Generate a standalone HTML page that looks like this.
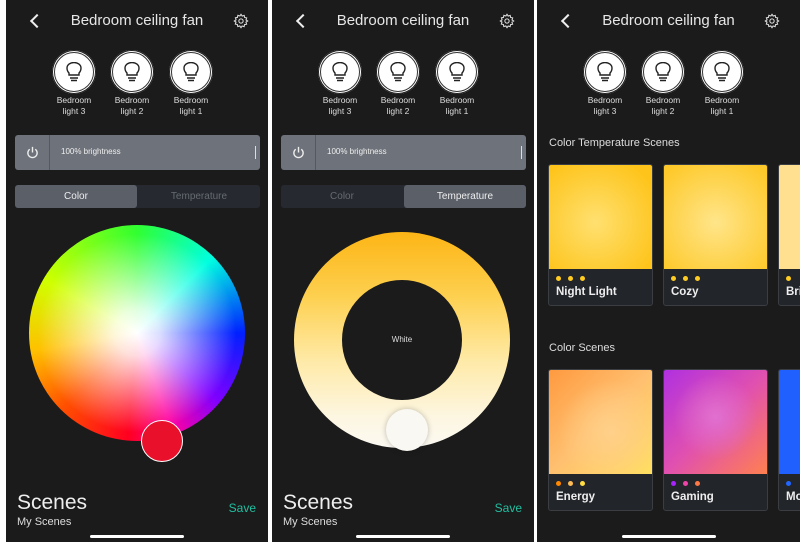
<!DOCTYPE html>
<html><head><meta charset="utf-8"><style>
*{margin:0;padding:0;box-sizing:border-box}
body{width:800px;height:542px;background:#fff;position:relative;overflow:hidden;font-family:"Liberation Sans",sans-serif;color:#fff}
.p{position:absolute;top:0;height:542px;background:#1b1b1b;overflow:hidden}
.t{position:absolute;top:12px;width:100%;text-align:center;font-size:15px;color:#e6e6e6}
.back{position:absolute;width:10px;height:10px;border-left:2px solid #eee;border-bottom:2px solid #eee;transform:rotate(45deg);left:26px;top:16px}
.gear{position:absolute;top:13px;right:19px}
.b{position:absolute;top:50px;width:44px;height:44px;border-radius:50%;background:#fff;box-shadow:0 0 0 1px #1b1b1b inset}
.b::after{content:"";position:absolute;inset:2px;border-radius:50%;border:1px solid #333}
.b svg{position:absolute;left:14px;top:12px}
.bl{position:absolute;top:95px;width:60px;text-align:center;font-size:8.5px;line-height:11px;color:#ddd}
.bar{position:absolute;left:9px;top:135px;width:245px;height:35px;background:#6e727a;border-radius:3px}
.bar .pw{position:absolute;left:0;top:0;width:35px;height:35px;border-right:1px solid #555a60}
.bar span{position:absolute;left:46px;top:12px;font-size:8px;color:#eee}
.bar i{position:absolute;right:4px;top:11px;width:1px;height:13px;background:#ddd}
.tabs{position:absolute;left:9px;top:185px;width:245px;height:23px;background:#262a30;border-radius:3px;font-size:10px}
.tabs div{position:absolute;top:0;width:122px;height:23px;text-align:center;line-height:23px;color:#666b72}
.tabs .on{background:#5a5f68;color:#eee;border-radius:3px}
.sc{position:absolute;left:11px;top:491px;font-size:21px;color:#eee}
.ms{position:absolute;left:11px;top:516px;font-size:11px;color:#ddd}
.sv{position:absolute;right:12px;top:501px;font-size:12px;color:#22bfa0}
.hb{position:absolute;bottom:4px;left:50%;margin-left:-47px;width:94px;height:3px;background:#fff;border-radius:2px}
.h{position:absolute;left:12px;font-size:11px;color:#ddd}
.card{position:absolute;width:105px;height:142px;border:1px solid #3a3d42;border-radius:3px;background:#22252a;overflow:hidden}
.card .g{height:104px}
.card .d{position:absolute;left:7px;top:111px;display:flex;gap:7px}
.card .d b{display:block;width:5px;height:5px;border-radius:50%}
.card .n{position:absolute;left:7px;top:121px;font-size:11.5px;font-weight:bold;color:#eee}
</style></head><body>

<!-- PANEL 1 -->
<div class="p" style="left:6px;width:262px">
<div class="back"></div><div class="t">Bedroom ceiling fan</div>
<svg class="gear" width="16" height="16" viewBox="0 0 24 24" fill="none" stroke="#ddd" stroke-width="1.6"><circle cx="12" cy="12" r="3.2"/><path d="M12 2l1.8 2.6 3-1 .6 3.1 3.1.6-1 3L22 12l-2.6 1.8 1 3-3.1.6-.6 3.1-3-1L12 22l-1.8-2.6-3 1-.6-3.1-3.1-.6 1-3L2 12l2.6-1.8-1-3 3.1-.6.6-3.1 3 1z"/></svg>
<div class="b" style="left:46px"><svg width="16" height="20" viewBox="0 0 16 20" fill="none" stroke="#222" stroke-width="1.4"><path d="M3 11C1 9 1 7 1 6a7 5.5 0 0 1 14 0c0 1 0 3-2 5v2H3z M4 16h8 M5 18.5h6"/></svg></div>
<div class="b" style="left:104px"><svg width="16" height="20" viewBox="0 0 16 20" fill="none" stroke="#222" stroke-width="1.4"><path d="M3 11C1 9 1 7 1 6a7 5.5 0 0 1 14 0c0 1 0 3-2 5v2H3z M4 16h8 M5 18.5h6"/></svg></div>
<div class="b" style="left:163px"><svg width="16" height="20" viewBox="0 0 16 20" fill="none" stroke="#222" stroke-width="1.4"><path d="M3 11C1 9 1 7 1 6a7 5.5 0 0 1 14 0c0 1 0 3-2 5v2H3z M4 16h8 M5 18.5h6"/></svg></div>
<div class="bl" style="left:38px">Bedroom<br>light 3</div>
<div class="bl" style="left:96px">Bedroom<br>light 2</div>
<div class="bl" style="left:155px">Bedroom<br>light 1</div>
<div class="bar"><div class="pw"><svg style="position:absolute;left:11px;top:11px" width="13" height="13" viewBox="0 0 14 14" fill="none" stroke="#eee" stroke-width="1.5"><path d="M4 3.5A5 5 0 1 0 10 3.5M7 1v6"/></svg></div><span>100% brightness</span><i></i></div>
<div class="tabs"><div class="on" style="left:0">Color</div><div style="left:123px">Temperature</div></div>
<div style="position:absolute;left:23px;top:225px;width:216px;height:216px;border-radius:50%;background:radial-gradient(circle,#fff 0%,rgba(255,255,255,.85) 15%,rgba(255,255,255,0) 65%),conic-gradient(from 0deg,#30ff30 0deg,#00ffe0 45deg,#0020ff 90deg,#8000ff 130deg,#ff00a0 160deg,#ff0020 185deg,#ff5000 225deg,#ffc000 260deg,#d0ff00 300deg,#30ff30 360deg)"></div>
<div style="position:absolute;left:135px;top:420px;width:42px;height:42px;border-radius:50%;background:#e8102a;border:1.5px solid #fff"></div>
<div class="sc">Scenes</div><div class="ms">My Scenes</div><div class="sv">Save</div><div class="hb"></div>
</div>

<!-- PANEL 2 -->
<div class="p" style="left:272px;width:262px">
<div class="back"></div><div class="t">Bedroom ceiling fan</div>
<svg class="gear" width="16" height="16" viewBox="0 0 24 24" fill="none" stroke="#ddd" stroke-width="1.6"><circle cx="12" cy="12" r="3.2"/><path d="M12 2l1.8 2.6 3-1 .6 3.1 3.1.6-1 3L22 12l-2.6 1.8 1 3-3.1.6-.6 3.1-3-1L12 22l-1.8-2.6-3 1-.6-3.1-3.1-.6 1-3L2 12l2.6-1.8-1-3 3.1-.6.6-3.1 3 1z"/></svg>
<div class="b" style="left:46px"><svg width="16" height="20" viewBox="0 0 16 20" fill="none" stroke="#222" stroke-width="1.4"><path d="M3 11C1 9 1 7 1 6a7 5.5 0 0 1 14 0c0 1 0 3-2 5v2H3z M4 16h8 M5 18.5h6"/></svg></div>
<div class="b" style="left:104px"><svg width="16" height="20" viewBox="0 0 16 20" fill="none" stroke="#222" stroke-width="1.4"><path d="M3 11C1 9 1 7 1 6a7 5.5 0 0 1 14 0c0 1 0 3-2 5v2H3z M4 16h8 M5 18.5h6"/></svg></div>
<div class="b" style="left:163px"><svg width="16" height="20" viewBox="0 0 16 20" fill="none" stroke="#222" stroke-width="1.4"><path d="M3 11C1 9 1 7 1 6a7 5.5 0 0 1 14 0c0 1 0 3-2 5v2H3z M4 16h8 M5 18.5h6"/></svg></div>
<div class="bl" style="left:38px">Bedroom<br>light 3</div>
<div class="bl" style="left:96px">Bedroom<br>light 2</div>
<div class="bl" style="left:155px">Bedroom<br>light 1</div>
<div class="bar"><div class="pw"><svg style="position:absolute;left:11px;top:11px" width="13" height="13" viewBox="0 0 14 14" fill="none" stroke="#eee" stroke-width="1.5"><path d="M4 3.5A5 5 0 1 0 10 3.5M7 1v6"/></svg></div><span>100% brightness</span><i></i></div>
<div class="tabs"><div style="left:0">Color</div><div class="on" style="left:123px">Temperature</div></div>
<div style="position:absolute;left:22px;top:232px;width:216px;height:216px;border-radius:50%;background:linear-gradient(180deg,#fdb515 0%,#fdd050 30%,#feeaa8 60%,#fdf6e0 85%,#fbf9f2 100%)"></div>
<div style="position:absolute;left:70px;top:280px;width:120px;height:120px;border-radius:50%;background:#1b1b1b;text-align:center;line-height:120px;font-size:8px;color:#ddd">White</div>
<div style="position:absolute;left:114px;top:409px;width:42px;height:42px;border-radius:50%;background:#faf8f2;box-shadow:0 0 6px rgba(0,0,0,.25)"></div>
<div class="sc">Scenes</div><div class="ms">My Scenes</div><div class="sv">Save</div><div class="hb"></div>
</div>

<!-- PANEL 3 -->
<div class="p" style="left:537px;width:263px">
<div class="back"></div><div class="t">Bedroom ceiling fan</div>
<svg class="gear" width="16" height="16" viewBox="0 0 24 24" fill="none" stroke="#ddd" stroke-width="1.6" style="right:20px"><circle cx="12" cy="12" r="3.2"/><path d="M12 2l1.8 2.6 3-1 .6 3.1 3.1.6-1 3L22 12l-2.6 1.8 1 3-3.1.6-.6 3.1-3-1L12 22l-1.8-2.6-3 1-.6-3.1-3.1-.6 1-3L2 12l2.6-1.8-1-3 3.1-.6.6-3.1 3 1z"/></svg>
<div class="b" style="left:46px"><svg width="16" height="20" viewBox="0 0 16 20" fill="none" stroke="#222" stroke-width="1.4"><path d="M3 11C1 9 1 7 1 6a7 5.5 0 0 1 14 0c0 1 0 3-2 5v2H3z M4 16h8 M5 18.5h6"/></svg></div>
<div class="b" style="left:104px"><svg width="16" height="20" viewBox="0 0 16 20" fill="none" stroke="#222" stroke-width="1.4"><path d="M3 11C1 9 1 7 1 6a7 5.5 0 0 1 14 0c0 1 0 3-2 5v2H3z M4 16h8 M5 18.5h6"/></svg></div>
<div class="b" style="left:163px"><svg width="16" height="20" viewBox="0 0 16 20" fill="none" stroke="#222" stroke-width="1.4"><path d="M3 11C1 9 1 7 1 6a7 5.5 0 0 1 14 0c0 1 0 3-2 5v2H3z M4 16h8 M5 18.5h6"/></svg></div>
<div class="bl" style="left:38px">Bedroom<br>light 3</div>
<div class="bl" style="left:96px">Bedroom<br>light 2</div>
<div class="bl" style="left:155px">Bedroom<br>light 1</div>
<div class="h" style="top:137px">Color Temperature Scenes</div>
<div class="card" style="left:11px;top:164px"><div class="g" style="background:radial-gradient(circle at 45% 55%,#ffe070,#fec41a 85%)"></div><div class="d"><b style="background:#fc2"></b><b style="background:#fc2"></b><b style="background:#fc2"></b></div><div class="n">Night Light</div></div>
<div class="card" style="left:126px;top:164px"><div class="g" style="background:radial-gradient(circle at 50% 55%,#ffe58a,#fec92a 90%)"></div><div class="d"><b style="background:#fc2"></b><b style="background:#fc2"></b><b style="background:#fc2"></b></div><div class="n">Cozy</div></div>
<div class="card" style="left:241px;top:164px"><div class="g" style="background:#ffe090"></div><div class="d"><b style="background:#fc2"></b></div><div class="n">Bri</div></div>
<div class="h" style="top:342px">Color Scenes</div>
<div class="card" style="left:11px;top:369px"><div class="g" style="background:radial-gradient(circle at 60% 60%,#ffd08a,rgba(255,200,120,0) 60%),linear-gradient(135deg,#ff9a40,#ffc070 50%,#ffe060)"></div><div class="d"><b style="background:#f80"></b><b style="background:#fb5"></b><b style="background:#fd4"></b></div><div class="n">Energy</div></div>
<div class="card" style="left:126px;top:369px"><div class="g" style="background:radial-gradient(circle at 50% 45%,#e070d0,rgba(224,112,208,0) 55%),linear-gradient(135deg,#b030e0,#e050b0 50%,#ff8050)"></div><div class="d"><b style="background:#a2f"></b><b style="background:#e4a"></b><b style="background:#f74"></b></div><div class="n">Gaming</div></div>
<div class="card" style="left:241px;top:369px"><div class="g" style="background:#2060ff"></div><div class="d"><b style="background:#26f"></b></div><div class="n">Mo</div></div>
<div class="hb"></div>
</div>
</body></html>
